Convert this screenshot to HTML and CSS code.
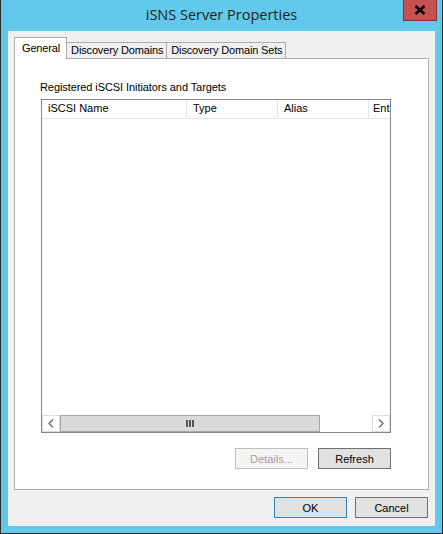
FILE: index.html
```html
<!DOCTYPE html>
<html lang="en">
<head>
  <meta charset="UTF-8">
  <title>iSNS Server Properties</title>
  <link rel="stylesheet" href="styles.css">
</head>
<body>
  <div class="window">
    <div class="titlebar">
      <span class="title">iSNS Server Properties</span>
      <div class="close-btn">
        <svg width="12" height="10" viewBox="0 0 12 10">
          <path d="M1.5 1 L10.5 9 M10.5 1 L1.5 9" stroke="#000" stroke-width="2.4" fill="none"/>
        </svg>
      </div>
    </div>

    <div class="client">
      <div class="tabs">
        <div class="tab active">General</div>
        <div class="tab">Discovery Domains</div>
        <div class="tab">Discovery Domain Sets</div>
      </div>

      <div class="panel">
        <div class="group-label">Registered iSCSI Initiators and Targets</div>

        <div class="listview">
          <div class="lv-header">
            <div class="lv-col col-name">iSCSI Name</div>
            <div class="lv-col col-type">Type</div>
            <div class="lv-col col-alias">Alias</div>
            <div class="lv-col col-ent">Ent</div>
          </div>
          <div class="lv-body"></div>
          <div class="hscroll">
            <div class="sb-arrow">
              <svg width="6" height="9" viewBox="0 0 6 9"><path d="M5 0.5 L1 4.5 L5 8.5" stroke="#606060" stroke-width="1.2" fill="none"/></svg>
            </div>
            <div class="sb-thumb">
              <span class="grip"></span><span class="grip"></span><span class="grip"></span>
            </div>
            <div class="sb-track"></div>
            <div class="sb-arrow">
              <svg width="6" height="9" viewBox="0 0 6 9"><path d="M1 0.5 L5 4.5 L1 8.5" stroke="#606060" stroke-width="1.2" fill="none"/></svg>
            </div>
          </div>
        </div>

        <div class="panel-buttons">
          <button class="btn" disabled>Details...</button>
          <button class="btn">Refresh</button>
        </div>
      </div>

      <div class="dialog-buttons">
        <button class="btn default">OK</button>
        <button class="btn">Cancel</button>
      </div>
    </div>
  </div>
</body>
</html>
```

FILE: styles.css
```css
body {
  margin: 0;
  padding: 0;
  font-family: "Liberation Sans", Arial, sans-serif;
  font-size: 11px;
  color: #000;
  background-color: #ffffff;
}
.window {
  width: 443px;
  height: 534px;
  box-sizing: border-box;
  background-color: #63c9ea;
  border: 1px solid #2b2b2b;
  border-top: none;
  display: flex;
  flex-direction: column;
}
.titlebar {
  position: relative;
  height: 31px;
  flex: none;
  text-align: center;
}
.title {
  display: inline-block;
  margin-top: 6px;
  font-family: "Open Sans", "Noto Sans", sans-serif;
  font-size: 14.5px;
  line-height: 18px;
  color: #1f1f1f;
}
.close-btn {
  position: absolute;
  top: 0;
  right: 5px;
  width: 34px;
  height: 21px;
  box-sizing: border-box;
  background-color: #c75050;
  border: 1px solid #7f3333;
  border-top: none;
  display: flex;
  align-items: center;
  justify-content: center;
}
.client {
  flex: 1;
  margin: 0 7px 7px 7px;
  background-color: #f0f0f0;
  padding: 7px 6px 8px 6px;
  display: flex;
  flex-direction: column;
}
.tabs {
  display: flex;
  align-items: flex-end;
  height: 20px;
  position: relative;
  z-index: 1;
}
.tab {
  height: 15px;
  line-height: 15px;
  padding: 0 3px 0 4px;
  border: 1px solid #adadad;
  border-bottom: none;
  background-color: #f0f0f0;
  margin-left: -1px;
  white-space: nowrap;
  letter-spacing: -0.15px;
}
.tab.active {
  margin-left: 0;
  height: 21px;
  line-height: 20px;
  margin-bottom: -1px;
  background-color: #ffffff;
  padding: 0 6px 0 7px;
  position: relative;
  z-index: 2;
}
.panel {
  flex: none;
  height: 430px;
  background-color: #ffffff;
  border: 1px solid #adadad;
  padding: 0 37px 0 26px;
  display: flex;
  flex-direction: column;
}
.group-label {
  margin-top: 21px;
  height: 15px;
  line-height: 15px;
  margin-left: -1px;
  letter-spacing: -0.08px;
}
.listview {
  margin-top: 4px;
  width: 350px;
  height: 334px;
  box-sizing: border-box;
  border: 1px solid #828790;
  display: flex;
  flex-direction: column;
  overflow: hidden;
}
.lv-header {
  display: flex;
  height: 18px;
  border-bottom: 1px solid #e5e5e5;
  flex: none;
}
.lv-col {
  box-sizing: border-box;
  padding-left: 6px;
  line-height: 17px;
  border-right: 1px solid #e5e5e5;
  white-space: nowrap;
  overflow: hidden;
}
.col-name { width: 145px; }
.col-type { width: 91px; }
.col-alias { width: 91px; }
.col-ent { flex: 1; border-right: none; padding-left: 4px; }
.lv-body {
  flex: 1;
}
.hscroll {
  flex: none;
  height: 17px;
  display: flex;
  background-color: #ffffff;
}
.sb-arrow {
  width: 18px;
  box-sizing: border-box;
  border: 1px solid #dcdcdc;
  display: flex;
  align-items: center;
  justify-content: center;
}
.sb-thumb {
  width: 260px;
  box-sizing: border-box;
  background-color: #dadada;
  border: 1px solid #a6a6a6;
  display: flex;
  align-items: center;
  justify-content: center;
  gap: 1px;
}
.grip {
  width: 2px;
  height: 7px;
  background-color: #555555;
}
.sb-track {
  flex: 1;
}
.panel-buttons {
  margin-top: 15px;
  width: 350px;
  display: flex;
  justify-content: flex-end;
  gap: 10px;
}
.btn {
  width: 73px;
  height: 21px;
  box-sizing: border-box;
  padding: 0;
  font-family: "Liberation Sans", Arial, sans-serif;
  font-size: 11px;
  color: #000;
  background-color: #e1e1e1;
  border: 1px solid #707070;
  border-radius: 0;
}
.btn:disabled {
  background-color: #f4f4f4;
  border-color: #bfbfbf;
  color: #a0a0a0;
}
.btn.default {
  border-color: #3c7fb1;
}
.dialog-buttons {
  margin-top: 7px;
  margin-right: 1px;
  display: flex;
  justify-content: flex-end;
  gap: 8px;
}
```
